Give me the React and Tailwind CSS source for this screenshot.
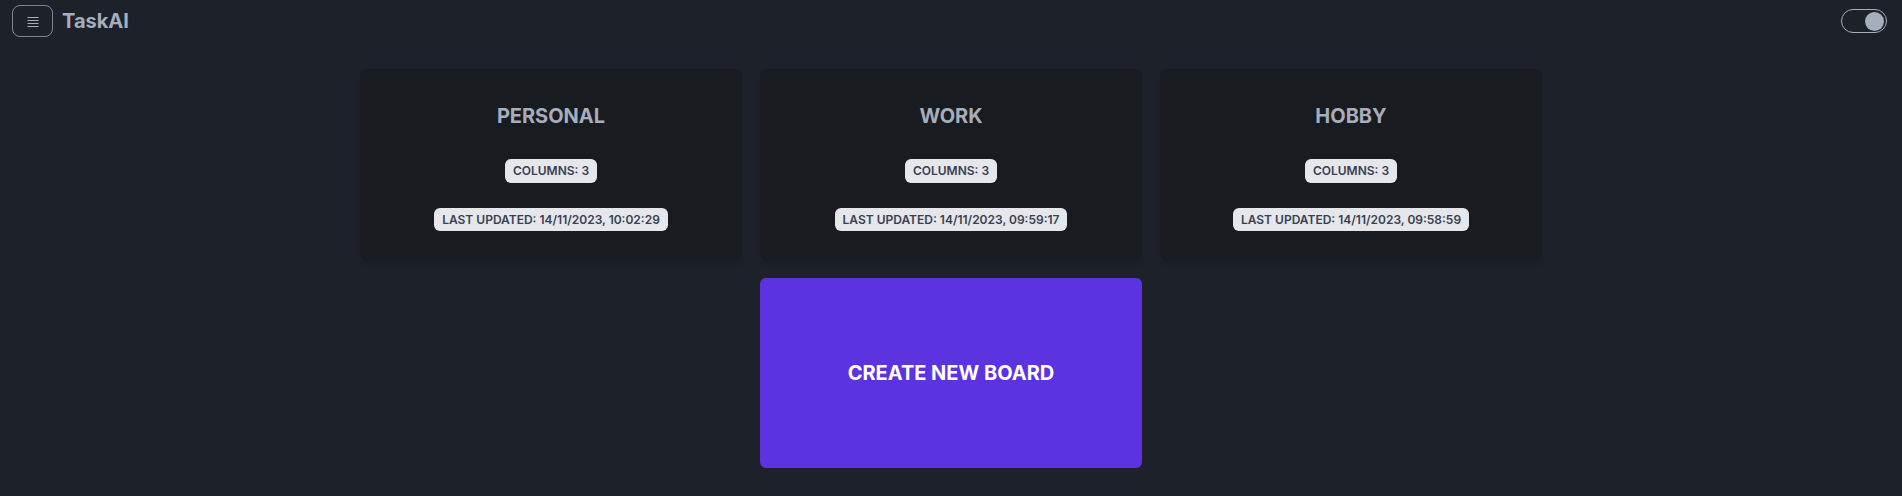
import React from "react";

const boards = [
  { name: "PERSONAL", columns: 3, updated: "14/11/2023, 10:02:29" },
  { name: "WORK", columns: 3, updated: "14/11/2023, 09:59:17" },
  { name: "HOBBY", columns: 3, updated: "14/11/2023, 09:58:59" },
];

/* -------------------- BOARD CARD -------------------- */
const BoardCard = ({ board }) => (
  <div className="h-[191px] bg-[#181b20] rounded-lg shadow-md flex flex-col items-center pt-[33px]">
    <h2 className="text-xl font-bold text-[#a6adbb] leading-7">{board.name}</h2>
    <span className="mt-[29px] bg-[#e5e7eb] text-[#374151] text-xs font-semibold rounded-md px-2 h-6 flex items-center">
      COLUMNS: {board.columns}
    </span>
    <span className="mt-[25px] bg-[#e5e7eb] text-[#374151] text-xs font-semibold rounded-md px-2 h-[23px] flex items-center">
      LAST UPDATED: {board.updated}
    </span>
  </div>
);

/* -------------------- MAIN COMPONENT -------------------- */
const App = () => {
  return (
    <div
      className="min-h-screen bg-[#1d222a] text-[#a6adbb]"
      style={{ fontFamily: "Inter, 'Noto Sans', sans-serif" }}
    >
      {/* Header */}
      <header className="h-[42px] flex items-center justify-between pl-3 pr-[15px]">
        <div className="flex items-center gap-[9px]">
          <button className="w-[41px] h-8 rounded-lg border border-[#a6adbb]/70 flex items-center justify-center">
            <svg width="12" height="11" viewBox="0 0 12 11">
              <g stroke="#a6adbb" strokeWidth="1">
                <line x1="0.5" y1="1.5" x2="11.5" y2="1.5" />
                <line x1="0.5" y1="4.5" x2="11.5" y2="4.5" />
                <line x1="0.5" y1="7.5" x2="11.5" y2="7.5" />
                <line x1="0.5" y1="10.5" x2="11.5" y2="10.5" />
              </g>
            </svg>
          </button>
          <span className="text-xl font-bold text-[#a6adbb]">TaskAI</span>
        </div>

        {/* Theme toggle */}
        <div className="w-[46px] h-6 rounded-full border border-[#a6adbb] flex items-center justify-end px-[2px]">
          <div className="w-[19px] h-[19px] rounded-full bg-[#a6adbb]" />
        </div>
      </header>

      {/* Boards */}
      <main className="pt-[27px] flex justify-center">
        <div className="grid grid-cols-[repeat(3,382px)] gap-[18px]">
          {boards.map((b, i) => (
            <BoardCard key={i} board={b} />
          ))}
          <button className="col-start-2 h-[190px] bg-[#5b33df] rounded-md text-white text-xl font-bold flex items-center justify-center">
            CREATE NEW BOARD
          </button>
        </div>
      </main>
    </div>
  );
};

export default App;
